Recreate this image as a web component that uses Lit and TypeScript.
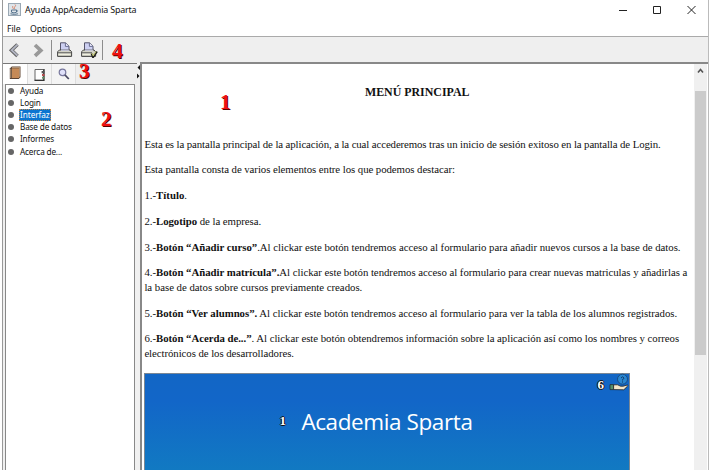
import { LitElement, html, css, svg } from "lit";
import { customElement, property } from "lit/decorators.js";

const icons: Record<string, unknown> = {
  java: svg`<rect x=".5" y=".5" width="12" height="12" fill="#dfe5ea" stroke="#9aa8b4"/><path d="M7 1.5c2 1.5-2 2.3 0 4.8M5 3c-1 1 0 2 .6 3" fill="none" stroke="#d98468"/><path d="M3.5 7h5v2.2q-2.5 1.5-5 0zM8.5 7.2q2 .2 0 1.8M2.5 10.8q4 1.2 7.5 0" fill="none" stroke="#58758f"/>`,
  back: svg`<path d="M9.5 1.5 3.5 7.2 9.5 13" fill="none" stroke="#666" stroke-width="3.6"/><path d="M9.5 1.7 3.7 7.2 9.5 12.7" fill="none" stroke="#b3b6c4" stroke-width="1.8"/>`,
  next: svg`<path d="M3 2 8.8 7.4 3 12.8" fill="none" stroke="#999" stroke-width="3.7"/>`,
  print: svg`<path d="M3.5 9V.8h5L12 4.2V9z" fill="#cdd0f2" stroke="#55556c"/><path d="M8.4 1v3.4H12" fill="#eef" stroke="#696d91"/><path d="M.6 9.8 2.4 8H13l1.6 1.8v4.6H.6z" fill="#d2d2c6" stroke="#444"/><path d="M1 10.7h13" stroke="#666"/><path d="M1.5 12.5h12" stroke="#efefdf"/><path d="M4 8.2h8" stroke="#d8daf5"/>`,
  setup: svg`<path d="M3.5 9V.8h5L12 4.2V9z" fill="#cdd0f2" stroke="#55556c"/><path d="M8.4 1v3.4H12" fill="#eef" stroke="#696d91"/><path d="M.6 9.8 2.4 8H13l1.6 1.8v4.6H.6z" fill="#d2d2c6" stroke="#444"/><path d="M1 10.7h10" stroke="#666"/><path d="M1.5 12.5h9" stroke="#efefdf"/><path d="M4 8.2h8" stroke="#d8daf5"/><path d="M10.5 11.5 12 15.3 16 9.5" fill="none" stroke="#222" stroke-width="2"/><path d="m11 11.2 1.2 2.7 2.8-4.5" fill="none" stroke="#d6dc75" stroke-width=".9"/>`,
  book: svg`<path d="M.8 2.5 2.8.5h8.7v10.7L9.7 13H.8z" fill="#594334"/><path d="M3 2.3h7.2V12H3z" fill="#c58a57"/><path d="M1.8 2.8v9.2M3 1.4h7.7v9.4" stroke="#dfc09d" stroke-width=".7" fill="none"/>`,
  index: svg`<path d="M1 1.5h8.5v10.8H1z" fill="#fff" stroke="#666"/><path d="M10 1v11.8M.5 12.3h10" stroke="#333" stroke-width="1.3"/><path d="M7.6 3h2.8v2.3H7.6z" fill="#555"/><path d="M8 6h2.6v2H8z" fill="#b64e4e"/><path d="M8 8.7h2.6v2H8z" fill="#668c68"/>`,
  search: svg`<circle cx="4.5" cy="4.4" r="3.3" fill="#e0e1fa" stroke="#77779c" stroke-width="1.2"/><path d="m7 7 3.8 4" stroke="#4a4a62" stroke-width="1.8"/>`,
  min: svg`<path d="M0 5.5h8" stroke="#222"/>`,
  max: svg`<path d="M.5 1.5h7v7h-7z" fill="none" stroke="#222"/>`,
  close: svg`<path d="m.5 1 8 8m0-8-8 8" fill="none" stroke="#222"/>`,
  up: svg`<path d="m1 4.5 2.5-3L6 4.5" fill="none" stroke="#555" stroke-width="1.6"/>`,
  split: svg`<path d="M3 0v5L.5 2.5zM0 8.5v5L2.5 11z" fill="#111"/>`,
  hand: svg`<circle cx="13.5" cy="6.2" r="5" fill="#2a86d0" stroke="#174d83"/><path d="M12 5q1.5-2.4 3 0 0 1-1.5 1.5v1M13.5 8.4v1.2" fill="none" stroke="#123d6b"/><path d="M1 11.6h3.6v5H1z" fill="#55906c" stroke="#222" stroke-width=".7"/><path d="M4.6 11.8h4l3 1.4h2.6l4.2-1.2q1 .2 0 1.3l-3.6 3.5-10.2-.2z" fill="#f4e6c8" stroke="#222" stroke-width=".8"/>`,
};

@customElement("ui-icon")
class UiIcon extends LitElement {
  @property() name = "";
  @property({ type: Number }) w = 16;
  @property({ type: Number }) h = 16;
  static styles = css`:host { display: block; flex: none; } svg { display: block; }`;
  render() {
    return html`<svg width=${this.w} height=${this.h} viewBox="0 0 ${this.w} ${this.h}">${icons[this.name]}</svg>`;
  }
}

@customElement("app-root")
class AppRoot extends LitElement {
  static styles = css`
    :host { display: block; width: 709px; height: 470px; overflow: hidden; background: #fff; color: #111;
      font: 9px/12px "Noto Sans", "Open Sans", sans-serif; }
    * { box-sizing: border-box; }
    .window { position: relative; height: 470px; margin-left: 2px; border-left: 1px solid #999; border-right: 1px solid #bbb;
      display: flex; flex-direction: column; }
    .title { height: 21px; display: flex; align-items: center; padding: 0 12px 2px 5px; flex: none; }
    .title span { margin-left: 4px; font-size: 8.9px; letter-spacing: -0.17px; flex: 1; }
    .controls { display: flex; gap: 26px; align-items: center; }
    .menu { height: 15px; flex: none; display: flex; gap: 9.5px; padding: 2px 4px; font-size: 8.7px; letter-spacing: -0.08px; }
    .tools { height: 27px; flex: none; background: #efefef; border-top: 1px solid #aaa; display: flex; align-items: center; padding-left: 5px; }
    .sep { width: 1px; height: 20px; background: #8c8c8c; }
    .next { margin-left: 12px; }
    .sep.first { margin: 0 5px 0 7px; }
    .setup { margin: 0 4px 0 8px; }
    .body { flex: 1; min-height: 0; display: flex; }
    .side { width: 134px; border-top: 1px solid #777; background: #f0f0f0; display: flex; flex-direction: column; }
    .tabs { height: 20px; flex: none; display: flex; background: #eee; }
    .tab { width: 24px; display: flex; justify-content: center; align-items: center; border-right: 1px solid #ddd; background: #f4f4f4; }
    .tab.on { width: 25px; background: #fff; padding-bottom: 2px; }
    .tree { flex: 1; margin: 0 2px; border: 1px solid #888; border-bottom: 0; background: #fff; display: flex; flex-direction: column; }
    .item { height: 12.1px; display: flex; align-items: center; padding-left: 2px; font-size: 8.2px; letter-spacing: -0.16px; line-height: 12px; }
    .item i { width: 6px; height: 6px; border-radius: 3px; background: #666; margin-right: 5px; }
    .item span { padding: 0 1px; }
    .item .sel { background: #0b75d1; color: #fff; outline: 1px dotted #cc873e; outline-offset: -1px; letter-spacing: -0.05px; }
    .split { width: 3px; background: #f0f0f0; padding-top: 2px; }
    .main { flex: 1; min-width: 0; border-left: 2px solid #888; border-top: 2px solid #888; margin-top: -1px; display: flex; }
    .doc { flex: 1; min-width: 0; padding-left: 2.4px; font: 10.8px/14.6px "Liberation Serif", serif; white-space: nowrap; overflow: hidden; }
    h1 { margin: 20.6px 0 37.4px; padding-right: 4px; text-align: center; font-size: 11.9px; line-height: 14.6px; }
    p { margin: 0 0 11.15px; }
    .line { display: block; width: max-content; }
    .bar { width: 13px; margin-right: 1px; background: #f0f0f0; flex: none; display: flex; flex-direction: column; align-items: center; }
    .thumb { width: 11px; height: 264px; margin-top: 17px; background: #cbcbcb; }
    .bar ui-icon { margin-top: 4px; }
    .hero { position: relative; width: 486px; height: 110px; margin-top: 12.4px; border: 1px solid #7a8795; border-bottom: 0;
      background: linear-gradient(#1266c5, #1266c8 25%, #117dc1); color: #fff; }
    .name { position: absolute; left: 156px; top: 34px; font: 22.5px/28px "Open Sans", sans-serif; letter-spacing: -0.4px; }
    .hand { position: absolute; right: 0; top: -1px; }
    .mark { position: absolute; font: bold 21px/22px "Liberation Serif", serif; color: #f01010; text-shadow: 1px 1px 0 #500; }
    .m1 { left: 217px; top: 91px; } .m2 { left: 98px; top: 108px; } .m3 { left: 76px; top: 60px; } .m4 { left: 109px; top: 40px; }
    .num { position: absolute; font: bold 13px/14px "Liberation Serif", serif; color: #fff; text-shadow: 1px 0 #111, -1px 0 #111, 0 1px #111, 0 -1px #111; }
    .n1 { left: 134px; top: 40px; } .n6 { left: 452px; top: 4px; }
  `;

  line(content: unknown, spacing = 0) {
    return html`<span class="line" style="letter-spacing:${spacing}px">${content}</span>`;
  }

  render() {
    return html`<div class="window">
      <div class="title"><ui-icon name="java" w="13" h="13"></ui-icon><span>Ayuda AppAcademia Sparta</span>
        <div class="controls"><ui-icon name="min" w="8" h="10"></ui-icon><ui-icon name="max" w="8" h="10"></ui-icon><ui-icon name="close" w="9" h="10"></ui-icon></div></div>
      <div class="menu"><span>File</span><span>Options</span></div>
      <div class="tools">
        <ui-icon name="back" w="12" h="15"></ui-icon><ui-icon class="next" name="next" w="12" h="15"></ui-icon>
        <div class="sep first"></div><ui-icon name="print" w="16" h="16"></ui-icon>
        <ui-icon class="setup" name="setup" w="17" h="16"></ui-icon><div class="sep"></div></div>
      <div class="body">
        <div class="side">
          <div class="tabs"><div class="tab on"><ui-icon name="book" w="12" h="14"></ui-icon></div><div class="tab"><ui-icon name="index" w="12" h="13"></ui-icon></div><div class="tab"><ui-icon name="search" w="12" h="12"></ui-icon></div></div>
          <div class="tree">${["Ayuda", "Login", "Interfaz", "Base de datos", "Informes", "Acerca de..."].map(
            (t) => html`<div class="item"><i></i><span class=${t === "Interfaz" ? "sel" : ""}>${t}</span></div>`)}</div>
        </div>
        <div class="split"><ui-icon name="split" w="3" h="14"></ui-icon></div>
        <div class="main">
          <div class="doc">
            <h1>MENÚ PRINCIPAL</h1>
            <p>${this.line("Esta es la pantalla principal de la aplicación, a la cual accederemos tras un inicio de sesión exitoso en la pantalla de Login.", -0.1)}</p>
            <p>${this.line("Esta pantalla consta de varios elementos entre los que podemos destacar:", -0.06)}</p>
            <p>${this.line(html`1.-<b>Título</b>.`)}</p>
            <p>${this.line(html`2.-<b>Logotipo</b> de la empresa.`, -0.04)}</p>
            <p>${this.line(html`3.-<b>Botón “Añadir curso”</b>.Al clickar este botón tendremos acceso al formulario para añadir nuevos cursos a la base de datos.`, -0.03)}</p>
            <p>${this.line(html`4.-<b>Botón “Añadir matrícula”.</b>Al clickar este botón tendremos acceso al formulario para crear nuevas matriculas y añadirlas a`, -0.036)}${this.line("la base de datos sobre cursos previamente creados.", -0.02)}</p>
            <p>${this.line(html`5.-<b>Botón “Ver alumnos”.</b> Al clickar este botón tendremos acceso al formulario para ver la tabla de los alumnos registrados.`, -0.025)}</p>
            <p>${this.line(html`6.-<b>Botón “Acerda de...”</b>. Al clickar este botón obtendremos información sobre la aplicación así como los nombres y correos`, -0.037)}${this.line("electrónicos de los desarrolladores.", -0.06)}</p>
            <div class="hero"><span class="num n1">1</span><span class="name">Academia Sparta</span><span class="num n6">6</span><ui-icon class="hand" name="hand" w="20" h="18"></ui-icon></div>
          </div>
          <div class="bar"><ui-icon name="up" w="7" h="6"></ui-icon><div class="thumb"></div></div>
        </div>
      </div>
      <span class="mark m1">1</span><span class="mark m2">2</span><span class="mark m3">3</span><span class="mark m4">4</span>
    </div>`;
  }
}
